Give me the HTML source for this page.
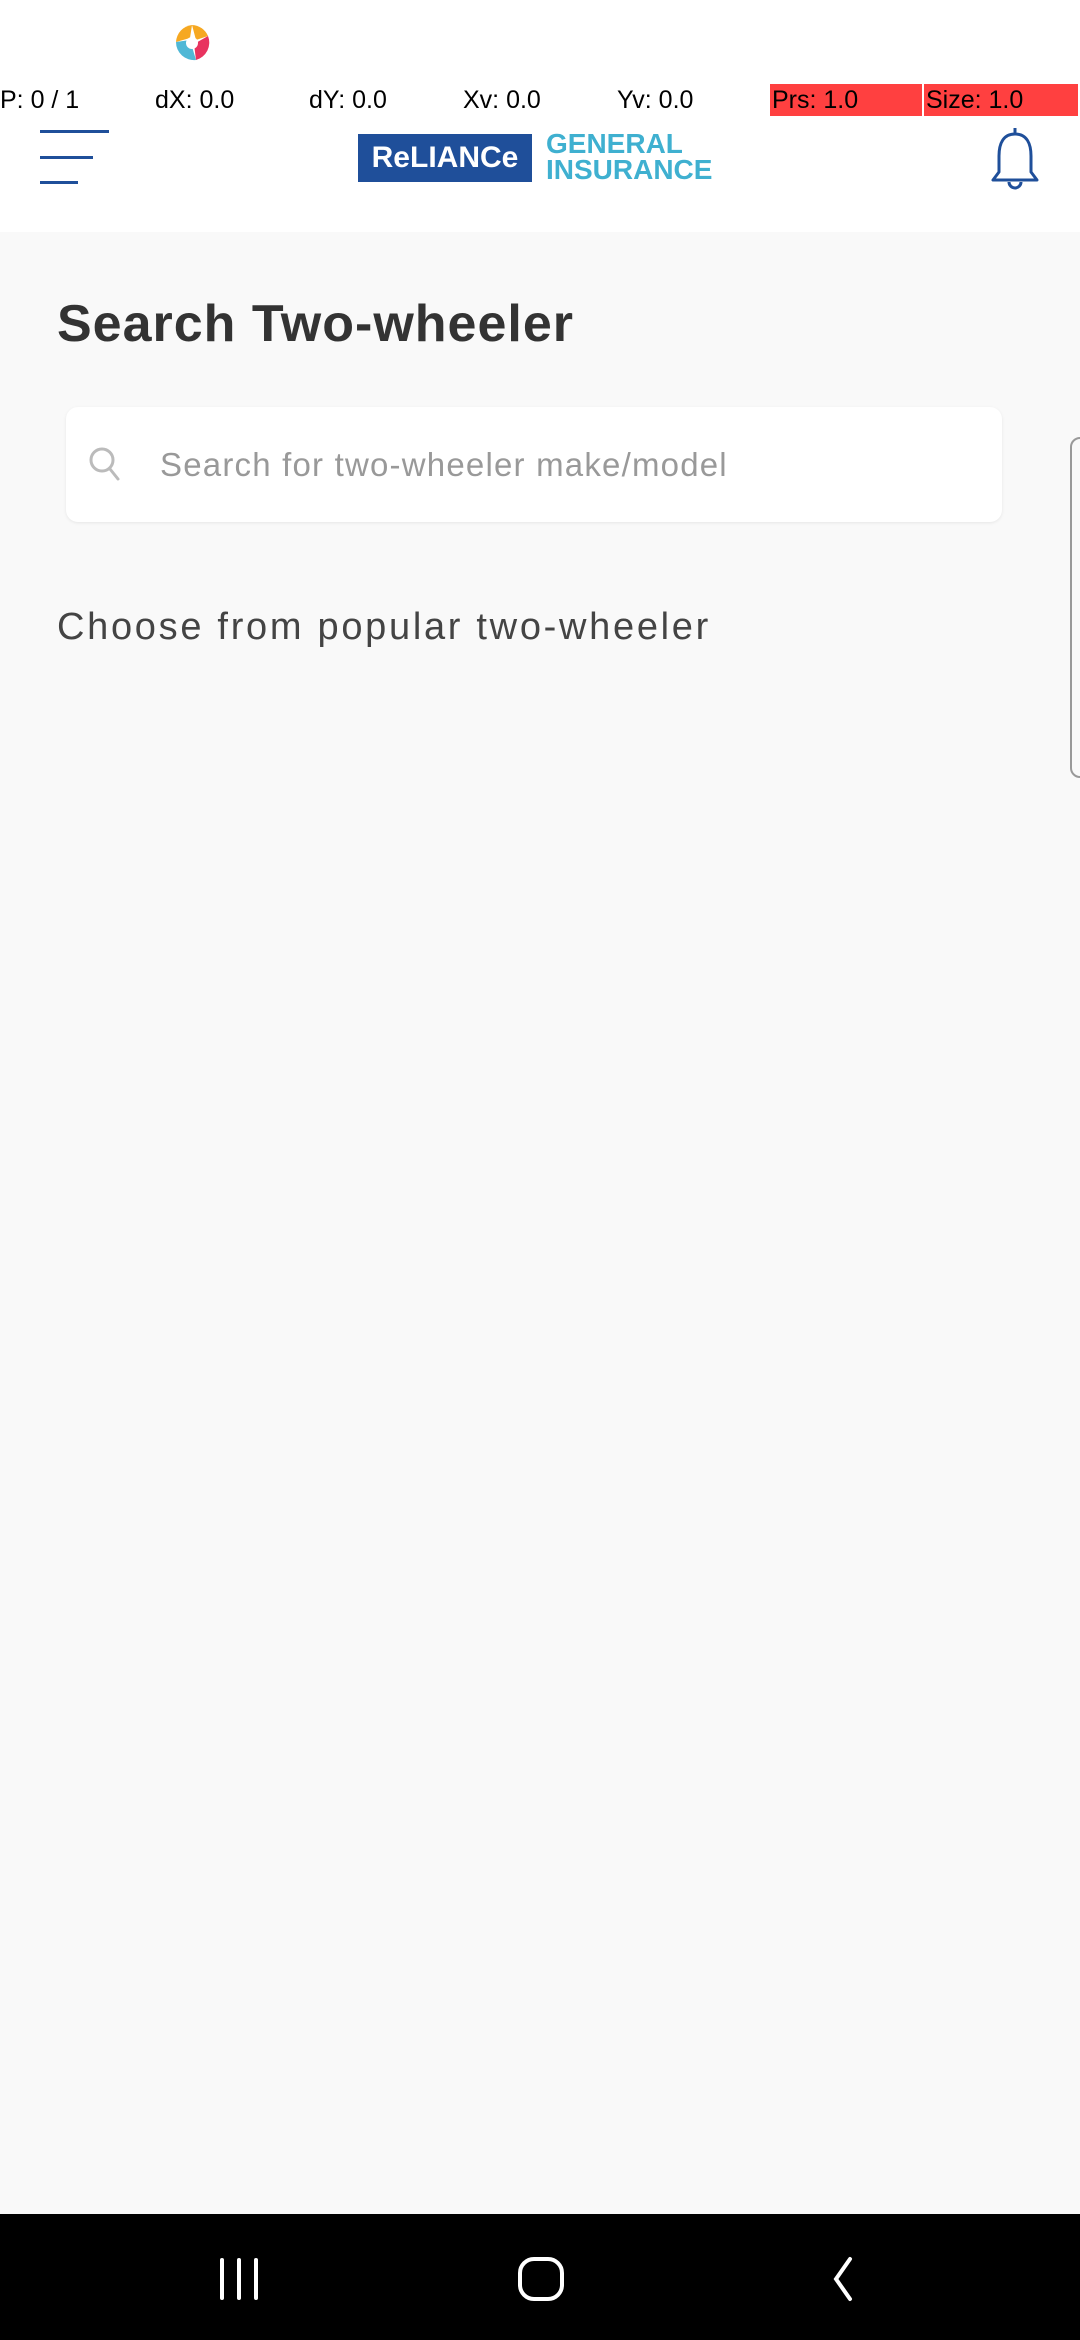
<!DOCTYPE html>
<html><head><meta charset="utf-8"><style>
*{margin:0;padding:0;box-sizing:border-box}
body{width:1080px;height:2340px;background:#f9f9f9;font-family:"Liberation Sans",sans-serif;position:relative;overflow:hidden}
.abs{position:absolute}
.dbg{font-size:25px;color:#000;top:84px;height:32px;line-height:32px}
</style></head><body>
<div class="abs" style="left:0;top:0;width:1080px;height:232px;background:#fff"></div>
<svg class="abs" style="left:170px;top:22px" width="44" height="42" viewBox="0 0 44 42">
<path d="M22 3 A18 18 0 0 1 38 14 L26 18 Z" fill="#f6a821"/>
<path d="M38 14 A18 18 0 0 1 26 38 L24 22 Z" fill="#e8335f"/>
<path d="M26 38 A18 18 0 0 1 6 20 L20 18 Z" fill="#4fb8d6"/>
<path d="M6 20 A18 18 0 0 1 22 3 L20 16 Z" fill="#f6a821"/>
<circle cx="22" cy="21" r="6" fill="#fff"/>
</svg>
<div class="abs dbg" style="left:0">P: 0 / 1</div>
<div class="abs dbg" style="left:155px">dX: 0.0</div>
<div class="abs dbg" style="left:309px">dY: 0.0</div>
<div class="abs dbg" style="left:463px">Xv: 0.0</div>
<div class="abs dbg" style="left:617px">Yv: 0.0</div>
<div class="abs dbg" style="left:770px;width:152px;background:#ff4040;padding-left:2px">Prs: 1.0</div>
<div class="abs dbg" style="left:924px;width:154px;background:#ff4040;padding-left:2px">Size: 1.0</div>
<div class="abs" style="left:40px;top:130px;width:69px;height:3px;background:#1f4f9a"></div>
<div class="abs" style="left:40px;top:156px;width:53px;height:3px;background:#1f4f9a"></div>
<div class="abs" style="left:40px;top:181px;width:38px;height:3px;background:#1f4f9a"></div>
<div class="abs" style="left:358px;top:134px;width:174px;height:48px;background:#1f4f9a;color:#fff;font-size:30px;font-weight:bold;text-align:center;line-height:48px">ReLIANCe</div>
<div class="abs" style="left:546px;top:131px;color:#3fb0d0;font-size:28px;font-weight:bold;line-height:26px">GENERAL<br>INSURANCE</div>
<svg class="abs" style="left:985px;top:124px" width="60" height="70" viewBox="0 0 60 70">
<path d="M30 4 V10 M30 10 C18 10 14 20 14 32 V48 L8 56 H52 L46 48 V32 C46 20 42 10 30 10 Z M24 58 A6 6 0 0 0 36 58" fill="none" stroke="#1f4f9a" stroke-width="3" stroke-linejoin="round"/>
</svg>
<div class="abs" style="left:57px;top:294px;font-size:52px;font-weight:bold;color:#333;letter-spacing:1px">Search Two-wheeler</div>
<div class="abs" style="left:66px;top:407px;width:936px;height:115px;background:#fff;border-radius:12px;box-shadow:0 1px 3px rgba(0,0,0,0.08)"></div>
<svg class="abs" style="left:86px;top:443px" width="40" height="42" viewBox="0 0 40 42"><circle cx="16" cy="17" r="11" fill="none" stroke="#bbb" stroke-width="3"/><path d="M24 26 L32 36" stroke="#bbb" stroke-width="3" stroke-linecap="round"/></svg>
<div class="abs" style="left:160px;top:446px;font-size:33px;color:#999;letter-spacing:1.2px">Search for two-wheeler make/model</div>
<div class="abs" style="left:57px;top:606px;font-size:38px;color:#444;letter-spacing:2.7px">Choose from popular two-wheeler</div>
<div class="abs" style="left:1070px;top:437px;width:20px;height:341px;border:2px solid #999;border-radius:10px"></div>
<div class="abs" style="left:0;top:2214px;width:1080px;height:126px;background:#000"></div>
<div class="abs" style="left:220px;top:2258px;width:4px;height:42px;background:#fff;border-radius:2px"></div>
<div class="abs" style="left:237px;top:2258px;width:4px;height:42px;background:#fff;border-radius:2px"></div>
<div class="abs" style="left:254px;top:2258px;width:4px;height:42px;background:#fff;border-radius:2px"></div>
<div class="abs" style="left:518px;top:2257px;width:46px;height:44px;border:4px solid #fff;border-radius:16px"></div>
<svg class="abs" style="left:828px;top:2256px" width="30" height="46" viewBox="0 0 30 46"><path d="M22 3 L8 23 L22 43" fill="none" stroke="#fff" stroke-width="4" stroke-linecap="round"/></svg>
</body></html>
